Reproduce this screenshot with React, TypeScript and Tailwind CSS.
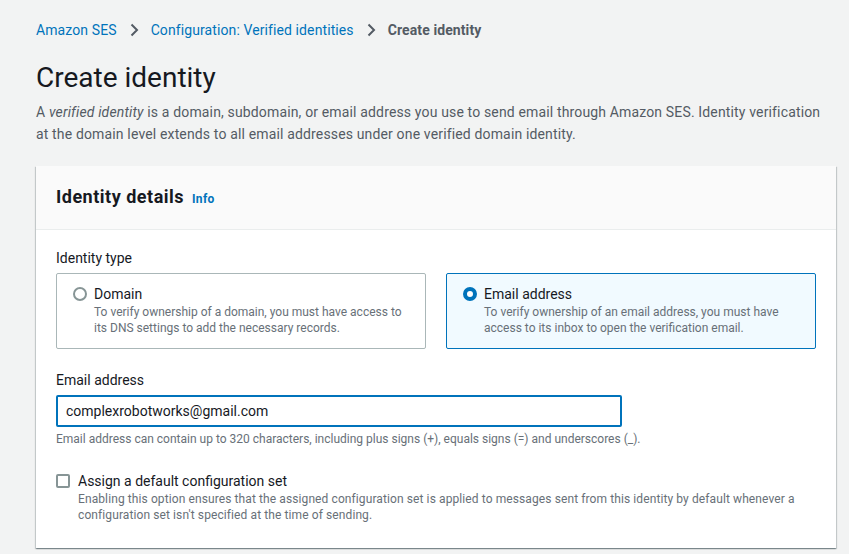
import { FC } from "react";

const ChevronRight: FC = () => (
  <svg width="16" height="16" viewBox="0 0 16 16" className="mx-[9px]">
    <path d="M5.5 2.5 11 8l-5.5 5.5" fill="none" stroke="#545b64" strokeWidth="2" />
  </svg>
);

const RadioTile: FC<{ label: string; desc: string; checked?: boolean }> = ({ label, desc, checked }) => (
  <div
    className={`flex gap-[7px] rounded-[2px] border px-[16px] pt-[10px] pb-[12px] ${
      checked ? "border-[#0073bb] bg-[#f1faff]" : "border-[#aab7b8] bg-white"
    }`}
  >
    <div className="pt-[3px]">
      {checked ? (
        <div className="h-[14px] w-[14px] rounded-full border-[4px] border-[#0073bb] bg-white" />
      ) : (
        <div className="h-[14px] w-[14px] rounded-full border-[2px] border-[#879596] bg-white" />
      )}
    </div>
    <div className="flex flex-col">
      <span className="text-[14px] leading-[20px] text-[#16191f]">{label}</span>
      <span className="text-[12px] leading-[16px] text-[#687078]">{desc}</span>
    </div>
  </div>
);

const App: FC = () => {
  return (
    <div className="min-h-[554px] bg-[#f2f3f3] px-[36px] pt-[20px] font-['Roboto',sans-serif] text-[#16191f]">
      <nav className="flex items-center text-[14px] leading-[20px] tracking-[0.1px]">
        <span className="text-[#0073bb]">Amazon SES</span>
        <ChevronRight />
        <span className="text-[#0073bb]">Configuration: Verified identities</span>
        <ChevronRight />
        <span className="font-bold text-[#545b64]">Create identity</span>
      </nav>

      <h1 className="mt-[20px] text-[28px] leading-[36px] font-normal">Create identity</h1>
      <p className="mt-[5px] w-[800px] text-[14px] leading-[22px] tracking-[0.15px] text-[#545b64]">
        A <i>verified identity</i> is a domain, subdomain, or email address you use to send email through Amazon SES. Identity verification at the domain level extends to all email addresses under one verified domain identity.
      </p>

      <div className="mt-[21px] w-[800px] bg-white shadow-[0_1px_1px_0_rgba(0,28,36,0.3),1px_1px_1px_0_rgba(0,28,36,0.15),-1px_1px_1px_0_rgba(0,28,36,0.15)]">
        <div className="flex items-baseline gap-[8px] border-b border-[#eaeded] bg-[#fafafa] px-[20px] pt-[18px] pb-[19px]">
          <h2 className="text-[18px] leading-[26px] font-bold tracking-[0.5px]">Identity details</h2>
          <span className="text-[12px] font-bold tracking-[0.3px] text-[#0073bb]">Info</span>
        </div>

        <div className="flex flex-col px-[20px] pt-[18px] pb-[25px]">
          <span className="text-[14px] leading-[20px]">Identity type</span>
          <div className="mt-[5px] grid grid-cols-2 gap-[20px]">
            <RadioTile
              label="Domain"
              desc="To verify ownership of a domain, you must have access to its DNS settings to add the necessary records."
            />
            <RadioTile
              checked
              label="Email address"
              desc="To verify ownership of an email address, you must have access to its inbox to open the verification email."
            />
          </div>

          <span className="mt-[21px] text-[14px] leading-[20px]">Email address</span>
          <div className="mt-[5px] flex h-[32px] w-[566px] items-center rounded-[2px] border-2 border-[#0073bb] px-[8px] text-[14px]">
            complexrobotworks@gmail.com
          </div>
          <span className="mt-[4px] text-[12px] leading-[16px] text-[#687078]">
            Email address can contain up to 320 characters, including plus signs (+), equals signs (=) and underscores (_).
          </span>

          <div className="mt-[24px] flex gap-[8px]">
            <div className="pt-[3px]">
              <div className="h-[14px] w-[14px] rounded-[2px] border-2 border-[#879596] bg-white" />
            </div>
            <div className="flex flex-col">
              <span className="text-[14px] leading-[20px]">Assign a default configuration set</span>
              <span className="text-[12px] leading-[16px] tracking-[0.1px] text-[#687078]">
                Enabling this option ensures that the assigned configuration set is applied to messages sent from this identity by default whenever a configuration set isn't specified at the time of sending.
              </span>
            </div>
          </div>
        </div>
      </div>
    </div>
  );
};

export default App;
